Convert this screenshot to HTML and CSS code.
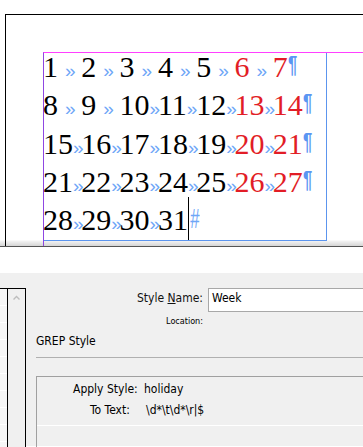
FILE: index.html
```html
<!DOCTYPE html>
<html>
<head>
<meta charset="utf-8">
<link rel="stylesheet" href="styles.css">
</head>
<body>
<div class="canvas">
  <div class="page">
    <div class="margins">
      <div class="frame">
        <div class="story">
          <div class="row">
            <span class="cell"><span class="num">1</span><span class="tab s">»</span></span>
            <span class="cell"><span class="num">2</span><span class="tab s">»</span></span>
            <span class="cell"><span class="num">3</span><span class="tab s">»</span></span>
            <span class="cell"><span class="num">4</span><span class="tab s">»</span></span>
            <span class="cell"><span class="num">5</span><span class="tab s">»</span></span>
            <span class="cell"><span class="num red">6</span><span class="tab s">»</span></span>
            <span class="cell last"><span class="num red">7</span><span class="pil">¶</span></span>
          </div>
          <div class="row">
            <span class="cell"><span class="num">8</span><span class="tab s">»</span></span>
            <span class="cell"><span class="num">9</span><span class="tab s">»</span></span>
            <span class="cell"><span class="num">10</span><span class="tab">»</span></span>
            <span class="cell"><span class="num">11</span><span class="tab">»</span></span>
            <span class="cell"><span class="num">12</span><span class="tab">»</span></span>
            <span class="cell"><span class="num red">13</span><span class="tab">»</span></span>
            <span class="cell last"><span class="num red">14</span><span class="pil">¶</span></span>
          </div>
          <div class="row">
            <span class="cell"><span class="num">15</span><span class="tab">»</span></span>
            <span class="cell"><span class="num">16</span><span class="tab">»</span></span>
            <span class="cell"><span class="num">17</span><span class="tab">»</span></span>
            <span class="cell"><span class="num">18</span><span class="tab">»</span></span>
            <span class="cell"><span class="num">19</span><span class="tab">»</span></span>
            <span class="cell"><span class="num red">20</span><span class="tab">»</span></span>
            <span class="cell last"><span class="num red">21</span><span class="pil">¶</span></span>
          </div>
          <div class="row">
            <span class="cell"><span class="num">21</span><span class="tab">»</span></span>
            <span class="cell"><span class="num">22</span><span class="tab">»</span></span>
            <span class="cell"><span class="num">23</span><span class="tab">»</span></span>
            <span class="cell"><span class="num">24</span><span class="tab">»</span></span>
            <span class="cell"><span class="num">25</span><span class="tab">»</span></span>
            <span class="cell"><span class="num red">26</span><span class="tab">»</span></span>
            <span class="cell last"><span class="num red">27</span><span class="pil">¶</span></span>
          </div>
          <div class="row">
            <span class="cell"><span class="num">28</span><span class="tab">»</span></span>
            <span class="cell"><span class="num">29</span><span class="tab">»</span></span>
            <span class="cell"><span class="num">30</span><span class="tab">»</span></span>
            <span class="cell last"><span class="num">31</span><span class="cursor"></span><span class="eos">#</span></span>
          </div>
        </div>
      </div>
    </div>
  </div>
</div>
<div class="gap"></div>
<div class="dialog">
  <div class="side">
    <div class="list"></div>
    <div class="scroll">
      <svg class="chev" width="17" height="12" viewBox="0 0 17 12"><polyline points="5.5,10.5 8.5,7.5 11.5,10.5" fill="none" stroke="#bdbdbd" stroke-width="1.4"/></svg>
    </div>
  </div>
  <div class="main">
    <div class="name-row">
      <span class="name-label">Style <u>N</u>ame:</span>
      <div class="input">Week</div>
    </div>
    <div class="location">Location:</div>
    <div class="section">GREP Style</div>
    <div class="sep"></div>
    <div class="group">
      <div class="grep-row first"><span class="g-label apply">Apply Style:</span><span class="g-value">holiday</span></div>
      <div class="grep-row second"><span class="g-label totext">To Text:</span><span class="g-value">\d*\t\d*\r|$</span></div>
      <div class="g-line"></div>
    </div>
  </div>
</div>
</body>
</html>
```
FILE: styles.css
```css
html, body {
  margin: 0;
  padding: 0;
  width: 363px;
  height: 447px;
  overflow: hidden;
  background: #fff;
}

.canvas {
  height: 247px;
  box-sizing: border-box;
  padding-top: 14px;
  overflow: hidden;
  border-bottom: 1px solid #555;
  background: linear-gradient(to bottom, #fff 0, #fff 240px, #f3f3f3 241px, #cfcfcf 247px);
}

.page {
  margin-left: 5px;
  border-top: 1px solid #000;
  border-left: 1px solid #000;
  padding: 37px 0 0 37px;
  height: 400px;
}

.margins {
  border-top: 1px solid #ff40ff;
  border-left: 1px solid #8f46e2;
  height: 400px;
}

.frame {
  display: flow-root;
  width: 282px;
  height: 187px;
  border-right: 1px solid #5c95ee;
  border-bottom: 1px solid #5c95ee;
}

.story {
  margin: -5px 0 0 -1px;
  font-family: "Liberation Serif", "Times New Roman", serif;
  font-size: 30px;
  color: #000;
}

.row {
  display: flex;
  height: 38.3px;
  line-height: 38.3px;
  white-space: nowrap;
}

.cell {
  flex: none;
  width: 38.3px;
  position: relative;
}

.cell.last {
  width: auto;
}

.red {
  color: #e21d26;
}

.tab {
  font-family: "Liberation Sans", Arial, sans-serif;
  font-size: 19px;
  line-height: 0;
  color: #6ea6f7;
}

.tab.s {
  margin-left: 7px;
}

.pil {
  display: inline-block;
  font-family: "Liberation Sans", Arial, sans-serif;
  font-weight: bold;
  font-size: 23px;
  line-height: 0;
  color: #5a96f2;
  transform: scaleX(0.72);
  transform-origin: left;
  vertical-align: 4px;
}

.cursor {
  position: absolute;
  left: 30px;
  top: -4px;
  width: 1px;
  height: 43px;
  background: #000;
}

.eos {
  display: inline-block;
  margin-left: 2px;
  font-family: "Liberation Sans", Arial, sans-serif;
  font-style: italic;
  font-size: 27px;
  line-height: 0;
  color: #6ea6f7;
  transform: scaleX(0.62);
  transform-origin: left;
  vertical-align: 2px;
}

.gap {
  height: 26px;
}

.dialog {
  height: 173px;
  background: #f0f0f0;
  display: flex;
  font-family: "DejaVu Sans Condensed", "DejaVu Sans", sans-serif;
  font-stretch: condensed;
  font-size: 12px;
  color: #000;
}

.side {
  flex: none;
  display: flex;
  margin-top: 15px;
  height: 200px;
  border-top: 1px solid #000;
}

.list {
  width: 7px;
  border-right: 1px solid #000;
  background: repeating-linear-gradient(to bottom, #f6f6f6 0, #f6f6f6 16px, #fff 16px, #fff 17px);
}

.scroll {
  width: 17px;
  border-right: 1px solid #000;
  background: #f0f0f0;
}

.chev {
  display: block;
}

.main {
  flex: 1;
  min-width: 0;
}

.name-row {
  display: flex;
  margin-top: 15px;
  height: 24px;
}

.name-label {
  flex: none;
  width: 177px;
  text-align: right;
  line-height: 14px;
  margin-top: 3px;
  color: #111;
}

.input {
  flex: none;
  width: 200px;
  margin-left: 5px;
  border: 1px solid #a8a8a8;
  background: #fff;
  padding: 2px 0 0 3px;
  line-height: 14px;
  height: 20px;
}

.location {
  width: 177px;
  text-align: right;
  font-size: 9px;
  line-height: 11px;
  margin-top: 4px;
  color: #000;
}

.section {
  margin: 7px 0 0 10px;
  line-height: 14px;
}

.sep {
  margin: 9px 0 0 10px;
  height: 1px;
  background: #b0b0b0;
}

.group {
  margin: 18px 0 0 10px;
  border-top: 1px solid #a0a0a0;
  border-left: 1px solid #a0a0a0;
  height: 100px;
  padding-top: 2px;
}

.grep-row {
  display: flex;
  line-height: 21px;
  white-space: nowrap;
}

.g-label {
  flex: none;
}

.g-label.apply {
  margin-left: 36px;
  width: 71px;
}

.g-label.totext {
  margin-left: 53px;
  width: 56px;
}

.g-line {
  margin-top: 4px;
  height: 1px;
  background: #fff;
}
```
